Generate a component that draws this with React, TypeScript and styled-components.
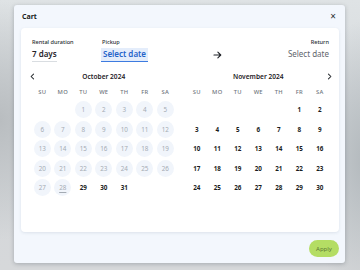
import React from 'react';
import styled, { createGlobalStyle } from 'styled-components';

const GlobalStyle = createGlobalStyle`
  html, body {
    margin: 0;
    padding: 0;
  }
  body {
    font-family: "Noto Sans", "Open Sans", sans-serif;
    width: 360px;
    height: 270px;
    overflow: hidden;
  }
`;

const WEEKDAYS = ['SU', 'MO', 'TU', 'WE', 'TH', 'FR', 'SA'];

interface MonthData {
  title: string;
  offset: number;
  days: number;
  disabledUntil: number;
  today?: number;
  side: 'prev' | 'next';
}

const months: MonthData[] = [
  { title: 'October 2024', offset: 2, days: 31, disabledUntil: 28, today: 28, side: 'prev' },
  { title: 'November 2024', offset: 5, days: 30, disabledUntil: 0, side: 'next' },
];

const Chevron = ({ dir }: { dir: 'prev' | 'next' }) => (
  <svg width="7" height="7" viewBox="0 0 8 8" fill="none">
    <path
      d={dir === 'prev' ? 'M5.2 1.2 2.4 4l2.8 2.8' : 'M2.8 1.2 5.6 4 2.8 6.8'}
      stroke="#2b2f33"
      strokeWidth="1.2"
      strokeLinecap="round"
      strokeLinejoin="round"
    />
  </svg>
);

const Month = ({ data }: { data: MonthData }) => {
  const cells: (number | null)[] = [];
  for (let i = 0; i < data.offset; i++) cells.push(null);
  for (let d = 1; d <= data.days; d++) cells.push(d);

  return (
    <MonthBox>
      <MonthHeader>
        <NavButton>{data.side === 'prev' && <Chevron dir="prev" />}</NavButton>
        <MonthTitle>{data.title}</MonthTitle>
        <NavButton>{data.side === 'next' && <Chevron dir="next" />}</NavButton>
      </MonthHeader>
      <Grid>
        {WEEKDAYS.map((w) => (
          <Weekday key={w}>{w}</Weekday>
        ))}
        {cells.map((d, i) =>
          d === null ? (
            <Cell key={i} />
          ) : (
            <Cell key={i}>
              <Day disabled={d <= data.disabledUntil} today={d === data.today}>
                {d}
              </Day>
            </Cell>
          ),
        )}
      </Grid>
    </MonthBox>
  );
};

const App: React.FC = () => {
  return (
    <>
      <GlobalStyle />
      <Backdrop>
        <Modal>
          <ModalHeader>
            <Title>Cart</Title>
            <CloseButton>×</CloseButton>
          </ModalHeader>
          <Card>
            <FieldsRow>
              <Field>
                <FieldLabel>Rental duration</FieldLabel>
                <DurationValue>7 days</DurationValue>
              </Field>
              <Field>
                <FieldLabel>Pickup</FieldLabel>
                <DateValue active>Select date</DateValue>
              </Field>
              <ArrowBox>
                <svg width="9" height="8" viewBox="0 0 10 9" fill="none">
                  <path
                    d="M1 4.5h7.6M5.4 1.2 8.7 4.5 5.4 7.8"
                    stroke="#1f2328"
                    strokeWidth="1.2"
                    strokeLinecap="round"
                    strokeLinejoin="round"
                  />
                </svg>
              </ArrowBox>
              <Field align="right">
                <FieldLabel>Return</FieldLabel>
                <DateValue>Select date</DateValue>
              </Field>
            </FieldsRow>
            <Months>
              {months.map((m) => (
                <Month key={m.title} data={m} />
              ))}
            </Months>
          </Card>
          <Footer>
            <ApplyButton>Apply</ApplyButton>
          </Footer>
        </Modal>
      </Backdrop>
    </>
  );
};

const Backdrop = styled.div`
  width: 360px;
  height: 270px;
  padding: 5px 14px 0 14px;
  box-sizing: border-box;
  background:
    radial-gradient(ellipse 80px 120px at 0px 120px, #b9bdc0 0%, rgba(185, 189, 192, 0) 100%),
    radial-gradient(ellipse 60px 140px at 365px 160px, #b3b9bd 0%, rgba(179, 185, 189, 0) 100%),
    linear-gradient(180deg, #dfe3e5 0%, #d3d7da 45%, #d6d8da 100%);
`;

const Modal = styled.div`
  width: 331px;
  height: 258px;
  box-sizing: border-box;
  background: #f3f7fd;
  border-radius: 3px;
  box-shadow: 0 1px 4px rgba(40, 50, 60, 0.28);
  padding: 0 6px 0 7px;
  display: flex;
  flex-direction: column;
`;

const ModalHeader = styled.div`
  height: 23px;
  display: flex;
  align-items: center;
  justify-content: space-between;
  padding: 0 3px 0 1px;
`;

const Title = styled.h1`
  margin: 0;
  font-size: 7px;
  font-weight: 700;
  color: #1a1d21;
  line-height: 1;
`;

const CloseButton = styled.span`
  font-size: 10px;
  line-height: 1;
  color: #2b2f33;
  margin-top: -1px;
`;

const Card = styled.div`
  height: 204px;
  box-sizing: border-box;
  background: #ffffff;
  border-radius: 4px;
  box-shadow: 0 1px 3px rgba(60, 80, 110, 0.12);
  padding: 10px 10px 0 11px;
`;

const FieldsRow = styled.div`
  display: flex;
  align-items: flex-start;
  height: 31px;
`;

const Field = styled.div<{ align?: 'right' }>`
  display: flex;
  flex-direction: column;
  align-items: ${({ align }) => (align === 'right' ? 'flex-end' : 'flex-start')};
  width: ${({ align }) => (align === 'right' ? 'auto' : '70px')};
  margin-left: ${({ align }) => (align === 'right' ? 'auto' : '0')};
`;

const FieldLabel = styled.span`
  font-size: 5.6px;
  line-height: 9px;
  font-weight: 500;
  color: #2a2e33;
  margin-bottom: 1px;
`;

const DurationValue = styled.span`
  font-size: 8px;
  line-height: 12px;
  font-weight: 600;
  color: #1f2328;
  padding-bottom: 1px;
  border-bottom: 1.5px solid #d9dde1;
`;

const DateValue = styled.span<{ active?: boolean }>`
  font-size: 8px;
  line-height: 12px;
  font-weight: ${({ active }) => (active ? 600 : 400)};
  color: ${({ active }) => (active ? '#2563c9' : '#5f666d')};
  background: ${({ active }) => (active ? '#e4edfb' : 'transparent')};
  padding: ${({ active }) => (active ? '0 2px 1px' : '0 0 1px')};
  border-bottom: 1.5px solid ${({ active }) => (active ? '#3d7be0' : 'transparent')};
  margin-left: ${({ active }) => (active ? '-1px' : '0')};
`;

const ArrowBox = styled.div`
  margin: 13px 0 0 41px;
  display: flex;
`;

const Months = styled.div`
  display: grid;
  grid-template-columns: 1fr 1fr;
  column-gap: 11px;
`;

const MonthBox = styled.div`
  display: flex;
  flex-direction: column;
`;

const MonthHeader = styled.div`
  display: flex;
  align-items: center;
  justify-content: space-between;
  height: 14px;
  margin: 0 -3px;
`;

const NavButton = styled.span`
  width: 7px;
  display: flex;
  align-items: center;
  justify-content: center;
`;

const MonthTitle = styled.span`
  font-size: 6.6px;
  font-weight: 600;
  color: #1f2328;
`;

const Grid = styled.div`
  display: grid;
  grid-template-columns: repeat(7, 20.5px);
  grid-auto-rows: 19.5px;
  grid-template-rows: 17px;
`;

const Weekday = styled.span`
  font-size: 5.8px;
  font-weight: 500;
  color: #6f767d;
  display: flex;
  align-items: center;
  justify-content: center;
  letter-spacing: 0.2px;
`;

const Cell = styled.div`
  display: flex;
  align-items: center;
  justify-content: center;
`;

const Day = styled.span<{ disabled?: boolean; today?: boolean }>`
  width: 17px;
  height: 17px;
  border-radius: 50%;
  display: flex;
  align-items: center;
  justify-content: center;
  font-size: 6.3px;
  font-weight: ${({ disabled }) => (disabled ? 400 : 700)};
  color: ${({ disabled }) => (disabled ? '#a4abb3' : '#1a1d21')};
  background: ${({ disabled }) => (disabled ? '#f1f5fb' : 'transparent')};
  text-decoration: ${({ today }) => (today ? 'underline' : 'none')};
  text-underline-offset: 1.5px;
`;

const Footer = styled.div`
  flex: 1;
  display: flex;
  align-items: center;
  justify-content: flex-end;
`;

const ApplyButton = styled.button`
  width: 30px;
  height: 17px;
  border: none;
  border-radius: 9px;
  background: #b4dd64;
  color: #5d7a33;
  font-family: "Noto Sans", "Open Sans", sans-serif;
  font-size: 6px;
  padding: 0;
  margin-top: 2px;
`;

export default App;
